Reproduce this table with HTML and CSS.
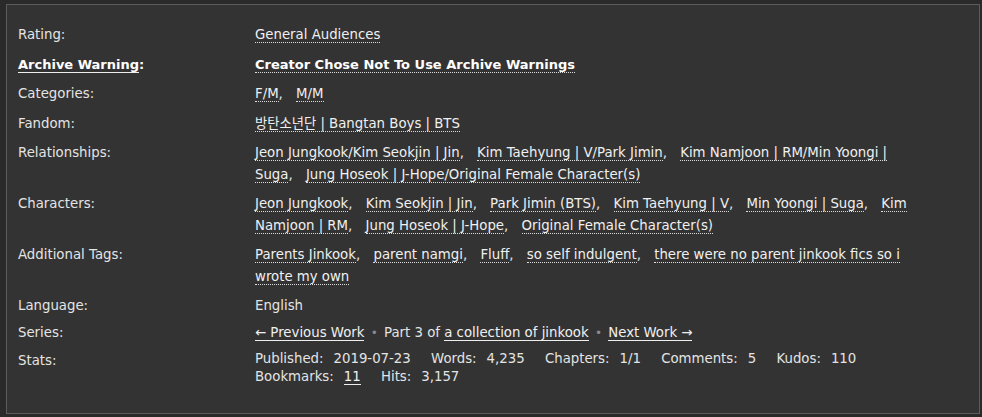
FILE: index.html
```
<!DOCTYPE html>
<html lang="en">
<head>
<meta charset="utf-8">
<title>Work meta</title>
<link rel="stylesheet" href="styles.css">
</head>
<body>
<div class="wrapper">
  <dl class="meta">
    <dt>Rating:</dt>
    <dd><ul class="tags"><li><a class="tag">General Audiences</a></li></ul></dd>

    <dt class="warning-label"><a class="help-link">Archive Warning</a>:</dt>
    <dd><ul class="tags"><li><a class="tag strong">Creator Chose Not To Use Archive Warnings</a></li></ul></dd>

    <dt>Categories:</dt>
    <dd><ul class="tags"><li><a class="tag">F/M</a>,</li> <li><a class="tag">M/M</a></li></ul></dd>

    <dt>Fandom:</dt>
    <dd><ul class="tags"><li><a class="tag">방탄소년단 | Bangtan Boys | BTS</a></li></ul></dd>

    <dt>Relationships:</dt>
    <dd><ul class="tags"><li><a class="tag">Jeon Jungkook/Kim Seokjin | Jin</a>,</li> <li><a class="tag">Kim Taehyung | V/Park Jimin</a>,</li> <li><a class="tag">Kim Namjoon | RM/Min Yoongi | Suga</a>,</li> <li><a class="tag">Jung Hoseok | J-Hope/Original Female Character(s)</a></li></ul></dd>

    <dt>Characters:</dt>
    <dd><ul class="tags"><li><a class="tag">Jeon Jungkook</a>,</li> <li><a class="tag">Kim Seokjin | Jin</a>,</li> <li><a class="tag">Park Jimin (BTS)</a>,</li> <li><a class="tag">Kim Taehyung | V</a>,</li> <li><a class="tag">Min Yoongi | Suga</a>,</li> <li><a class="tag">Kim Namjoon | RM</a>,</li> <li><a class="tag">Jung Hoseok | J-Hope</a>,</li> <li><a class="tag">Original Female Character(s)</a></li></ul></dd>

    <dt>Additional Tags:</dt>
    <dd><ul class="tags"><li><a class="tag">Parents Jinkook</a>,</li> <li><a class="tag">parent namgi</a>,</li> <li><a class="tag">Fluff</a>,</li> <li><a class="tag">so self indulgent</a>,</li> <li><a class="tag">there were no parent jinkook fics so i wrote my own</a></li></ul></dd>

    <dt class="language">Language:</dt>
    <dd class="language">English</dd>

    <dt class="series">Series:</dt>
    <dd class="series"><a class="link">← Previous Work</a> <span class="divider">•</span> Part 3 of <a class="link">a collection of jinkook</a> <span class="divider">•</span> <a class="link">Next Work →</a></dd>

    <dt class="stats-label">Stats:</dt>
    <dd class="stats">
      <dl class="stats-list">
        <dt>Published:</dt><dd>2019-07-23</dd>
        <dt>Words:</dt><dd>4,235</dd>
        <dt>Chapters:</dt><dd>1/1</dd>
        <dt>Comments:</dt><dd>5</dd>
        <dt>Kudos:</dt><dd>110</dd>
        <dt>Bookmarks:</dt><dd><a class="link">11</a></dd>
        <dt>Hits:</dt><dd>3,157</dd>
      </dl>
    </dd>
  </dl>
</div>
</body>
</html>
```
FILE: styles.css
```
html, body {
  margin: 0;
  padding: 0;
  background: #2a2a2a;
}
body {
  padding: 4px 2px 0 6px;
  font-family: "DejaVu Sans", "Noto Sans CJK KR", sans-serif;
  font-size: 13.3px;
  color: #e4e4e4;
}
.wrapper {
  background: #333333;
  border: 1px solid #5c5c5c;
  height: 410px;
  box-sizing: border-box;
  padding: 19px 43px 0 11px;
}
.meta {
  display: grid;
  grid-template-columns: 237px 1fr;
  margin: 0;
  line-height: 21.5px;
}
.meta > dt,
.meta > dd {
  margin: 0 0 8px 0;
}
.meta > dt.language,
.meta > dd.language {
  margin-bottom: 5px;
}
.meta > dt.series,
.meta > dd.series {
  margin-bottom: 6px;
}
.tags {
  list-style: none;
  margin: 0;
  padding: 0;
  display: inline;
}
.tags li {
  display: inline;
  margin-right: 9px;
}
.tags li:last-child {
  margin-right: 0;
}
.tag {
  color: #f0f0f0;
  border-bottom: 1px dotted #dddddd;
  text-decoration: none;
}
.tag.strong {
  font-weight: bold;
  font-size: 13px;
  color: #ffffff;
}
.warning-label {
  font-weight: bold;
  font-size: 13px;
  color: #ffffff;
}
.help-link {
  color: #ffffff;
  border-bottom: 1px solid #eeeeee;
}
.link {
  color: #f0f0f0;
  border-bottom: 1px solid #eeeeee;
}
.divider {
  color: #8a8a8a;
  font-size: 12px;
  margin: 0 2px;
}
.stats-list {
  margin: 0;
  line-height: 18px;
}
.stats-list dt,
.stats-list dd {
  display: inline;
  margin: 0;
}
.stats-list dt {
  margin-right: 10px;
}
.stats-list dd {
  margin-right: 16px;
}
```
